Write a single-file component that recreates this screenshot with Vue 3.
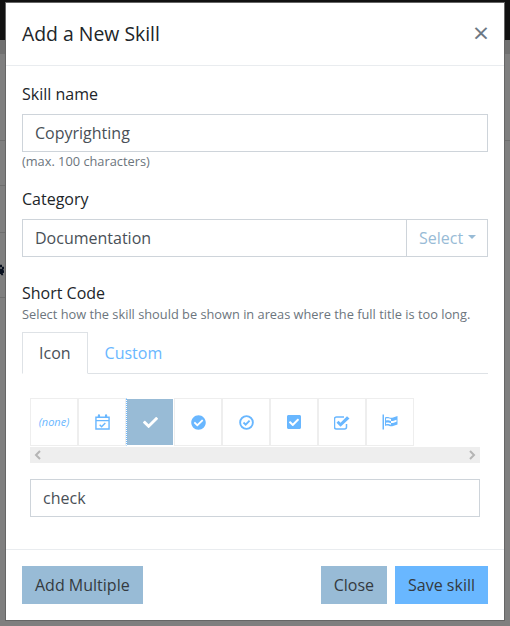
<template>
  <div class="page">
    <svg class="paw" viewBox="0 0 6 16"><path d="M0 0h3v4H0zM3 3h3v4H3zM0 6h4l2 3v3l-2 1 1 3H2l-1-2H0z" /></svg>
    <div class="modal">
      <div class="modal-header">
        <h5>Add a New Skill</h5>
        <span class="close">×</span>
      </div>
      <div class="modal-body">
        <div class="form-group">
          <label>Skill name</label>
          <input class="form-control" value="Copyrighting" readonly />
          <small>(max. 100 characters)</small>
        </div>
        <div class="form-group category">
          <label>Category</label>
          <div class="input-group">
            <input class="form-control" value="Documentation" readonly />
            <div class="select-btn">Select<span class="caret"></span></div>
          </div>
        </div>
        <label class="tight">Short Code</label>
        <small>Select how the skill should be shown in areas where the full title is too long.</small>
        <div class="tabs">
          <div class="tab active">Icon</div>
          <div class="tab">Custom</div>
        </div>
        <div class="pane">
          <div class="tiles">
            <div class="tile none"><em>(none)</em></div>
            <div v-for="icon in icons" :key="icon.name" class="tile" :class="{ selected: icon.name === 'check' }">
              <svg :viewBox="icon.box" :width="icon.w" :height="icon.h">
                <path v-for="(p, i) in icon.parts" :key="i" :d="p.d" :class="p.kind || 'solid'" />
              </svg>
            </div>
          </div>
          <div class="scrollbar">
            <svg viewBox="0 0 8 10" width="8" height="10"><path d="M6 1 2 5l4 4" /></svg>
            <svg viewBox="0 0 8 10" width="8" height="10"><path d="M2 1l4 4-4 4" /></svg>
          </div>
          <input class="form-control" value="check" readonly />
        </div>
      </div>
      <div class="modal-footer">
        <button class="btn secondary">Add Multiple</button>
        <div class="right">
          <button class="btn secondary">Close</button>
          <button class="btn primary">Save skill</button>
        </div>
      </div>
    </div>
  </div>
</template>

<script setup>
const icons = [
  {
    name: 'calendar-check',
    box: '0 0 16 17',
    w: 15,
    h: 16,
    parts: [
      { d: 'M1 3.500h14v12.500H1zM1 7h14', kind: 'thin' },
      { d: 'M3 1.500a1.200 1.200 0 0 1 2.400 0V4H3zM10.600 1.500a1.200 1.200 0 0 1 2.400 0V4h-2.400z', kind: 'soft' },
      { d: 'M5 11.500l2 2 4-4', kind: 'thin' },
    ],
  },
  {
    name: 'check',
    box: '0 0 512 512',
    w: 15,
    h: 15,
    parts: [
      { d: 'M173.898 439.404l-166.4-166.4c-9.997-9.997-9.997-26.206 0-36.204l36.203-36.204c9.997-9.998 26.207-9.998 36.204 0L192 312.69 432.095 72.596c9.997-9.997 26.207-9.997 36.204 0l36.203 36.204c9.997 9.997 9.997 26.206 0 36.204l-294.4 294.401c-9.998 9.997-26.207 9.997-36.204-.001z' },
    ],
  },
  {
    name: 'check-circle',
    box: '0 0 512 512',
    w: 15,
    h: 15,
    parts: [
      { d: 'M504 256c0 136.967-111.033 248-248 248S8 392.967 8 256 119.033 8 256 8s248 111.033 248 248zM227.314 387.314l184-184c6.248-6.248 6.248-16.379 0-22.627l-22.627-22.627c-6.248-6.249-16.379-6.249-22.628 0L216 308.118l-70.059-70.059c-6.248-6.248-16.379-6.248-22.628 0l-22.627 22.627c-6.248 6.248-6.248 16.379 0 22.627l104 104c6.249 6.249 16.379 6.249 22.628.001z' },
    ],
  },
  {
    name: 'check-circle-o',
    box: '0 0 16 16',
    w: 15,
    h: 15,
    parts: [
      { d: 'M8 1.200a6.800 6.800 0 1 0 0 13.600A6.800 6.800 0 0 0 8 1.200z', kind: 'line' },
      { d: 'M4.800 8l2.300 2.300 4.200-4.300', kind: 'line' },
    ],
  },
  {
    name: 'check-square',
    box: '0 0 448 512',
    w: 14,
    h: 16,
    parts: [
      { d: 'M400 480H48c-26.51 0-48-21.49-48-48V80c0-26.51 21.49-48 48-48h352c26.51 0 48 21.49 48 48v352c0 26.51-21.49 48-48 48zm-204.686-98.059l184-184c6.248-6.248 6.248-16.379 0-22.627l-22.627-22.627c-6.248-6.248-16.379-6.249-22.628 0L184 302.745l-70.059-70.059c-6.248-6.248-16.379-6.248-22.628 0l-22.627 22.627c-6.248 6.248-6.248 16.379 0 22.627l104 104c6.249 6.25 16.379 6.25 22.628.001z' },
    ],
  },
  {
    name: 'check-square-o',
    box: '0 0 16 15',
    w: 16,
    h: 15,
    parts: [
      { d: 'M12.500 9v3a2 2 0 0 1-2 2h-8a2 2 0 0 1-2-2V4a2 2 0 0 1 2-2H10', kind: 'thin' },
      { d: 'M6.500 11.800 2.500 7.800 4.500 5.800 6.500 7.800 13 1.300 15.500 3.500z' },
    ],
  },
  {
    name: 'flag-checkered',
    box: '0 0 16 16',
    w: 16,
    h: 16,
    parts: [
      { d: 'M0.500 0.500h1.500v15H0.500z' },
      { d: 'M3 3.500c3-1.600 5 1 8 0l4.500-1.500v8.500l-4.500 1.500c-3 1-5-1.600-8 0z', kind: 'soft' },
      { d: 'M4 4.500c2-.800 3.500.300 5 .500v2c-1.500-.200-3-1.300-5-.500zM9 7c1.500.200 3-.300 5.500-1.200v2c-2.500.900-4 1.400-5.500 1.200zM4 8.700c2-.800 3.500.300 5 .500v1.500c-1.500-.200-3-1.300-5-.500z', kind: 'cut' },
    ],
  },
]
</script>

<style scoped>
.page {
  position: relative;
  width: 510px;
  height: 626px;
  overflow: hidden;
  box-sizing: border-box;
  padding: 2px 5px 0;
  font-family: 'Open Sans', 'Liberation Sans', sans-serif;
  font-size: 16px;
  line-height: 24px;
  color: #212529;
  background:
    linear-gradient(to bottom, #111 0 40px, #707070 40px 54px, transparent 54px),
    linear-gradient(to bottom, transparent 140px, #6e6e6e 140px 141px, transparent 141px),
    linear-gradient(to bottom, transparent 185px, #6e6e6e 185px 186px, transparent 186px 232px, #6e6e6e 232px 233px, transparent 233px 297px, #6e6e6e 297px 298px, transparent 298px) 0 0 / 6px 100% no-repeat,
    #7f7f7f;
}

.paw {
  position: absolute;
  left: 0;
  top: 262px;
  width: 4px;
  height: 16px;
  fill: #08101f;
}

.modal {
  box-sizing: border-box;
  width: 500px;
  height: 619px;
  background: #fff;
  border: 1px solid #666;
  display: flex;
  flex-direction: column;
}

.modal-header {
  display: flex;
  justify-content: space-between;
  align-items: center;
  height: 62px;
  box-sizing: content-box;
  padding: 0 15px 0 16px;
  border-bottom: 1px solid #e9ecef;
}

h5 {
  margin: 0;
  font-size: 19.400px;
  font-weight: 400;
  line-height: 30px;
}

.close {
  font-size: 28px;
  line-height: 24px;
  color: #6d7884;
  margin-top: -4px;
}

.modal-body {
  flex: 1;
  padding: 16px;
}

label {
  display: block;
  margin-bottom: 8px;
}

label.tight {
  margin-bottom: 0;
}

.form-group {
  margin-bottom: 16px;
}

.category {
  margin-bottom: 24px;
}

.form-control {
  display: block;
  box-sizing: border-box;
  width: 100%;
  height: 38px;
  padding: 6px 12px;
  border: 1px solid #ced4da;
  border-radius: 0;
  outline: none;
  background: #fff;
  color: #495057;
  font: inherit;
}

small {
  display: block;
  font-size: 12.800px;
  line-height: 19.200px;
  color: #6c757d;
}

.input-group {
  display: flex;
}

.input-group .form-control {
  flex: 1;
  min-width: 0;
}

.select-btn {
  display: flex;
  align-items: center;
  box-sizing: border-box;
  width: 82px;
  height: 38px;
  padding: 0 12px;
  margin-left: -1px;
  border: 1px solid #ced4da;
  color: #98bbd6;
}

.caret {
  width: 0;
  height: 0;
  margin-left: 4.500px;
  margin-top: -1px;
  border-top: 4px solid #98bbd6;
  border-left: 4px solid transparent;
  border-right: 4px solid transparent;
}

.tabs {
  display: flex;
  margin-top: 8px;
  border-bottom: 1px solid #dee2e6;
}

.tab {
  box-sizing: border-box;
  height: 42px;
  margin-bottom: -1px;
  padding: 8px 16px;
  border: 1px solid transparent;
  color: #69b7ff;
}

.tab.active {
  color: #495057;
  background: #fff;
  border-color: #dee2e6 #dee2e6 #fff;
}

.pane {
  padding: 24px 8px 16px;
}

.tiles {
  display: flex;
}

.tile {
  box-sizing: border-box;
  display: flex;
  align-items: center;
  justify-content: center;
  width: 48px;
  height: 48px;
  border: 1px solid #eee;
}

.tile em {
  font-size: 11px;
  color: #69b7ff;
}

.tile .solid {
  fill: #69b7ff;
}

.tile .line {
  fill: none;
  stroke: #69b7ff;
  stroke-width: 2;
}

.tile .thin {
  fill: none;
  stroke: #69b7ff;
  stroke-width: 1.500;
}

.tile .soft {
  fill: #69b7ff;
}

.tile .cut {
  fill: #fff;
}

.tile.selected {
  background: #98bbd6;
  background-clip: padding-box;
  border-color: transparent transparent transparent #69b7ff;
  border-left-style: dotted;
}

.tile.selected .solid {
  fill: #fff;
}

.scrollbar {
  display: flex;
  justify-content: space-between;
  align-items: center;
  height: 16px;
  padding: 0 4px;
  margin: 1px 0 16px;
  background: #eee;
}

.scrollbar path {
  fill: none;
  stroke: #b5b5b5;
  stroke-width: 2;
}

.modal-footer {
  display: flex;
  justify-content: space-between;
  padding: 16px;
  border-top: 1px solid #e9ecef;
}

.right {
  display: flex;
  gap: 8px;
}

.btn {
  height: 38px;
  padding: 0 12px;
  border: 1px solid transparent;
  font: inherit;
  color: #343a40;
}

.secondary {
  background: #98bbd6;
}

.primary {
  background: #69b7ff;
}
</style>
